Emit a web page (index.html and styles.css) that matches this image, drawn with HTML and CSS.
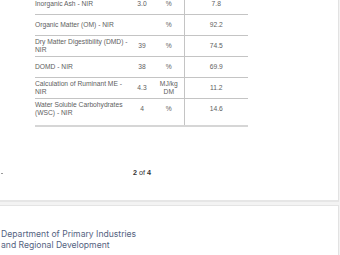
FILE: index.html
```html
<!DOCTYPE html>
<html>
<head>
<meta charset="utf-8">
<link rel="stylesheet" href="styles.css">
</head>
<body>
<div class="page">
  <section class="report">
    <div class="table-wrap">
      <table class="results">
        <colgroup>
          <col class="c-name"><col class="c-val"><col class="c-unit"><col class="c-res">
        </colgroup>
        <tbody>
          <tr><td class="name">Inorganic Ash - NIR</td><td class="num">3.0</td><td class="unit">%</td><td class="res">7.8</td></tr>
          <tr><td class="name">Organic Matter (OM) - NIR</td><td class="num"></td><td class="unit">%</td><td class="res">92.2</td></tr>
          <tr><td class="name">Dry Matter Digestibility (DMD) - NIR</td><td class="num">39</td><td class="unit">%</td><td class="res">74.5</td></tr>
          <tr><td class="name">DOMD - NIR</td><td class="num">38</td><td class="unit">%</td><td class="res">69.9</td></tr>
          <tr><td class="name">Calculation of Ruminant ME - NIR</td><td class="num">4.3</td><td class="unit">MJ/kg<br>DM</td><td class="res">11.2</td></tr>
          <tr class="last"><td class="name">Water Soluble Carbohydrates (WSC) - NIR</td><td class="num">4</td><td class="unit">%</td><td class="res">14.6</td></tr>
        </tbody>
      </table>
    </div>
    <div class="pager">
      <span class="dot"></span>
      <span class="count"><b>2</b> of <b>4</b></span>
    </div>
  </section>
  <footer class="footer">
    <p class="dept">Department of Primary Industries<br>and Regional Development</p>
  </footer>
</div>
</body>
</html>
```
FILE: styles.css
```css
html, body {
  margin: 0;
  padding: 0;
}
body {
  width: 340px;
  height: 255px;
  overflow: hidden;
  background: #f3f3f3;
}
.page {
  width: 339px;
}
.report {
  background: #ffffff;
  border-right: 1px solid #e2e2e2;
  border-bottom: 2px solid #e6e6e6;
  margin-top: -6px;
  height: 208px;
  box-sizing: border-box;
}
.table-wrap {
  padding-left: 35px;
}
.results {
  border-collapse: collapse;
  table-layout: fixed;
  width: 213px;
  font-family: "Liberation Sans", Arial, sans-serif;
  font-size: 6.7px;
  line-height: 8px;
  color: #5e5e5e;
}
.c-name { width: 95px; }
.c-val { width: 24px; }
.c-unit { width: 30px; }
.c-res { width: 64px; }
.results td {
  padding: 0;
  height: 20px;
  vertical-align: middle;
  border-bottom: 1px solid #c4c4c4;
}
.results td.name { text-align: left; padding-right: 2px; }
.results td.num { text-align: center; }
.results td.unit { text-align: center; }
.results td.res { text-align: center; border-left: 1px solid #c4c4c4; }
.results tr.last td {
  height: 20px;
  padding-bottom: 6px;
  border-bottom: 2px solid #d6d6d6;
}
.pager {
  display: flex;
  align-items: center;
  margin-top: 42px;
  height: 8px;
}
.dot {
  width: 2px;
  height: 1px;
  margin-left: 1px;
  background: #9a9a9a;
}
.count {
  margin-left: 130px;
  font-family: "Liberation Sans", Arial, sans-serif;
  font-size: 7.2px;
  line-height: 8px;
  color: #333333;
}
.count b { font-weight: bold; }
.footer {
  margin-top: 3px;
  background: #ffffff;
  border-top: 1px solid #e4e4e4;
  border-right: 1px solid #e2e2e2;
  height: 60px;
  padding-top: 23px;
  box-sizing: border-box;
}
.dept {
  margin: 0;
  padding-left: 1px;
  font-family: Inter, "Noto Sans", sans-serif;
  font-size: 8.6px;
  line-height: 10.5px;
  color: #55637f;
}
```
